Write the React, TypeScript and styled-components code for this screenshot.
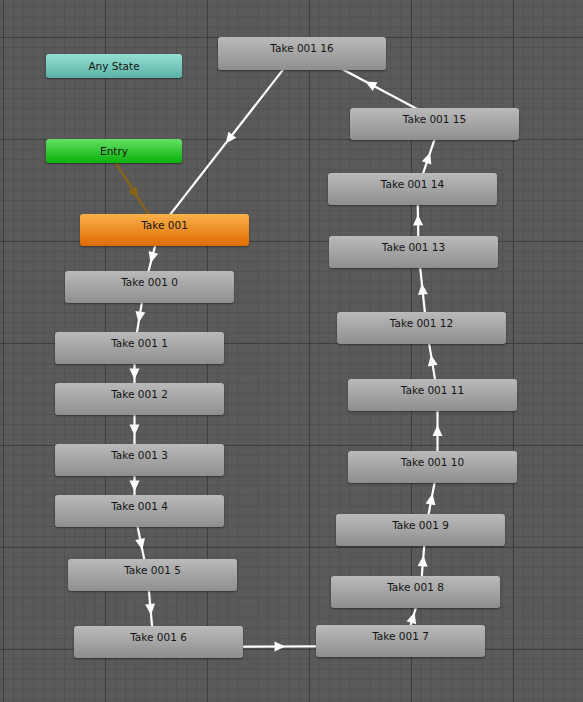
import React from "react";
import styled, { createGlobalStyle } from "styled-components";

const GlobalStyle = createGlobalStyle`
  html, body {
    margin: 0;
    padding: 0;
    background: #5a5a5a;
  }
`;

type Kind = "state" | "default" | "any" | "entry";

interface NodeData {
  id: string;
  label: string;
  x: number;
  y: number;
  w: number;
  h: number;
  kind: Kind;
}

const nodes: NodeData[] = [
  { id: "any", label: "Any State", x: 46, y: 54, w: 136, h: 24, kind: "any" },
  { id: "entry", label: "Entry", x: 46, y: 139, w: 136, h: 24, kind: "entry" },
  { id: "t", label: "Take 001", x: 80, y: 214, w: 169, h: 32, kind: "default" },
  { id: "t0", label: "Take 001 0", x: 65, y: 271, w: 169, h: 32, kind: "state" },
  { id: "t1", label: "Take 001 1", x: 55, y: 332, w: 169, h: 32, kind: "state" },
  { id: "t2", label: "Take 001 2", x: 55, y: 383, w: 169, h: 32, kind: "state" },
  { id: "t3", label: "Take 001 3", x: 55, y: 444, w: 169, h: 32, kind: "state" },
  { id: "t4", label: "Take 001 4", x: 55, y: 495, w: 169, h: 32, kind: "state" },
  { id: "t5", label: "Take 001 5", x: 68, y: 559, w: 169, h: 32, kind: "state" },
  { id: "t6", label: "Take 001 6", x: 74, y: 626, w: 169, h: 32, kind: "state" },
  { id: "t7", label: "Take 001 7", x: 316, y: 625, w: 169, h: 32, kind: "state" },
  { id: "t8", label: "Take 001 8", x: 331, y: 576, w: 169, h: 32, kind: "state" },
  { id: "t9", label: "Take 001 9", x: 336, y: 514, w: 169, h: 32, kind: "state" },
  { id: "t10", label: "Take 001 10", x: 348, y: 451, w: 169, h: 32, kind: "state" },
  { id: "t11", label: "Take 001 11", x: 348, y: 379, w: 169, h: 32, kind: "state" },
  { id: "t12", label: "Take 001 12", x: 337, y: 312, w: 169, h: 32, kind: "state" },
  { id: "t13", label: "Take 001 13", x: 329, y: 236, w: 169, h: 32, kind: "state" },
  { id: "t14", label: "Take 001 14", x: 328, y: 173, w: 169, h: 32, kind: "state" },
  { id: "t15", label: "Take 001 15", x: 350, y: 108, w: 169, h: 32, kind: "state" },
  { id: "t16", label: "Take 001 16", x: 218, y: 37, w: 168, h: 33, kind: "state" },
];

const chain = ["t", "t0", "t1", "t2", "t3", "t4", "t5", "t6", "t7", "t8", "t9", "t10", "t11", "t12", "t13", "t14", "t15", "t16", "t"];

const edges: { from: string; to: string; color: string }[] = [
  { from: "entry", to: "t", color: "#8a6414" },
  ...chain.slice(0, -1).map((id, i) => ({ from: id, to: chain[i + 1], color: "#ffffff" })),
];

const byId = (id: string) => nodes.find((n) => n.id === id)!;

const fills: Record<Kind, { top: string; bottom: string }> = {
  state: { top: "#bababa", bottom: "#8e8e8e" },
  default: { top: "#fbb04a", bottom: "#de6c00" },
  any: { top: "#95e0d3", bottom: "#5bb2a6" },
  entry: { top: "#66e066", bottom: "#08b008" },
};

function Transition({ from, to, color }: { from: string; to: string; color: string }) {
  const a = byId(from);
  const b = byId(to);
  const ax = a.x + a.w / 2;
  const ay = a.y + a.h / 2;
  const bx = b.x + b.w / 2;
  const by = b.y + b.h / 2;
  const len = Math.hypot(bx - ax, by - ay);
  const dx = (bx - ax) / len;
  const dy = (by - ay) / len;
  // unity shifts each transition sideways so both directions fit
  const ox = -dy * 5;
  const oy = dx * 5;
  const x1 = ax + ox;
  const y1 = ay + oy;
  const x2 = bx + ox;
  const y2 = by + oy;
  const mx = (x1 + x2) / 2;
  const my = (y1 + y2) / 2;
  const tip = [mx + dx * 6, my + dy * 6];
  const back = [mx - dx * 5, my - dy * 5];
  const left = [back[0] - dy * 5, back[1] + dx * 5];
  const right = [back[0] + dy * 5, back[1] - dx * 5];
  return (
    <g>
      <line x1={x1} y1={y1} x2={x2} y2={y2} stroke={color} strokeWidth={2.2} />
      <polygon points={`${tip.join(",")} ${left.join(",")} ${right.join(",")}`} fill={color} />
    </g>
  );
}

export default function App() {
  return (
    <>
      <GlobalStyle />
      <Canvas>
        <Wires width={583} height={702}>
          {edges.map((e) => (
            <Transition key={e.from + e.to} {...e} />
          ))}
        </Wires>
        {nodes.map((n) => (
          <StateNode
            key={n.id}
            $top={fills[n.kind].top}
            $bottom={fills[n.kind].bottom}
            $small={n.h < 30}
            style={{ left: n.x, top: n.y, width: n.w, height: n.h }}
          >
            {n.label}
          </StateNode>
        ))}
      </Canvas>
    </>
  );
}

const Canvas = styled.div`
  position: relative;

  width: 583px;
  height: 702px;

  overflow: hidden;

  background-color: #5a5a5a;
  background-image:
    linear-gradient(to right, #3e3e3e 1px, transparent 1px),
    linear-gradient(to bottom, #3e3e3e 1px, transparent 1px),
    linear-gradient(to right, #515151 1px, transparent 1px),
    linear-gradient(to bottom, #515151 1px, transparent 1px);
  background-size:
    102px 102px,
    102px 102px,
    10.2px 10.2px,
    10.2px 10.2px;
  background-position:
    3px 37px,
    3px 37px,
    3px 6.4px,
    3px 6.4px;
`;

const Wires = styled.svg`
  position: absolute;
  top: 0;
  left: 0;
`;

const StateNode = styled.div<{ $top: string; $bottom: string; $small: boolean }>`
  position: absolute;
  box-sizing: border-box;

  display: flex;
  justify-content: center;
  align-items: ${(p) => (p.$small ? "center" : "flex-start")};

  padding-top: ${(p) => (p.$small ? "0" : "5px")};

  border-radius: 3px;
  background: linear-gradient(to bottom, ${(p) => p.$top}, ${(p) => p.$bottom});
  box-shadow: 0 1px 2px rgba(0, 0, 0, 0.45);

  color: #141414;
  font-family: "DejaVu Sans", "Noto Sans", sans-serif;
  font-size: 10.5px;
  line-height: 13px;
  white-space: nowrap;
`;
